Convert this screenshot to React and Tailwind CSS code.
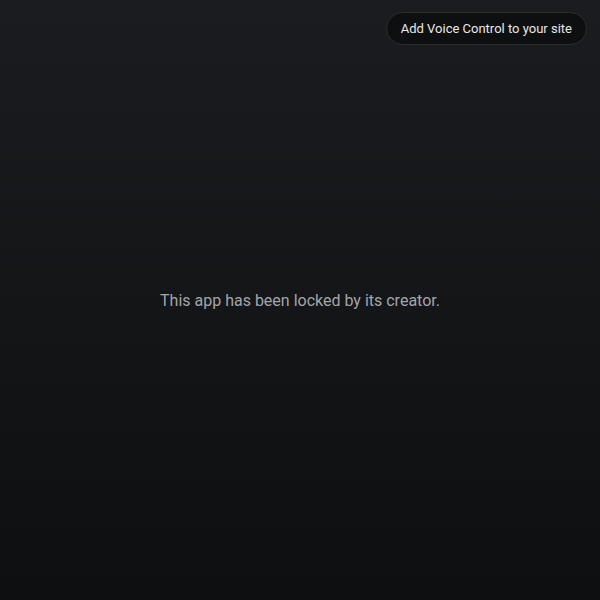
export default function App() {
  return (
    <div
      className="relative flex h-[600px] w-[600px] items-center justify-center bg-gradient-to-b from-[#1b1c1f] to-[#0e0f11]"
      style={{ fontFamily: "Roboto, 'Liberation Sans', sans-serif" }}
    >
      <button className="absolute right-[13px] top-[12px] h-[33px] rounded-full border border-[#2c2d30] bg-[#0e0f11] px-[14px] text-[13px] text-[#e8e8e8]">
        Add Voice Control to your site
      </button>
      <p className="mt-[2px] text-[16px] text-[#a3a5a8]">This app has been locked by its creator.</p>
    </div>
  );
}
